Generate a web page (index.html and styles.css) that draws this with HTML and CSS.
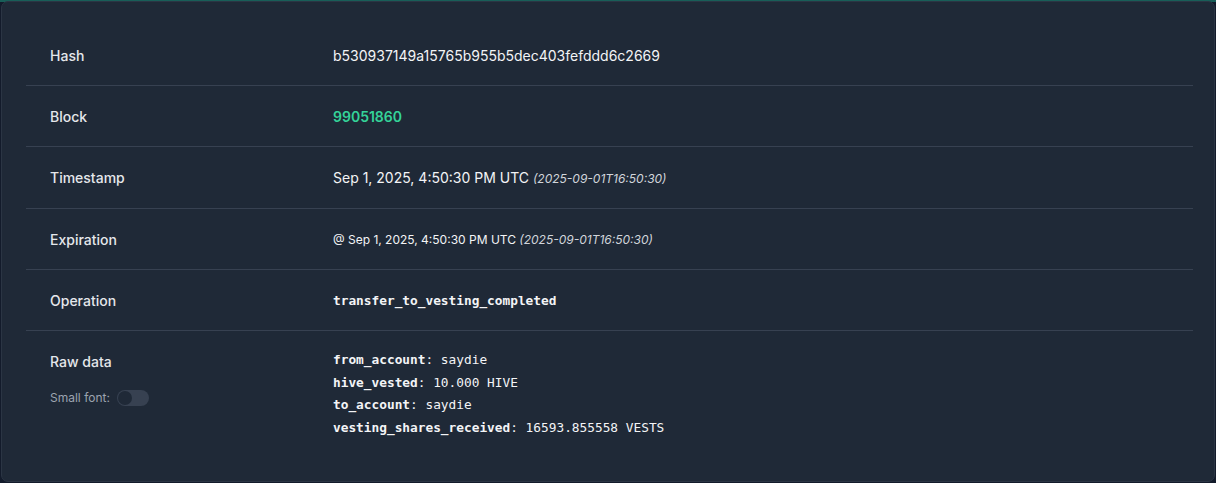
FILE: index.html
```html
<!DOCTYPE html>
<html lang="en">
<head>
<meta charset="utf-8">
<title>Transaction</title>
<link rel="stylesheet" href="styles.css">
</head>
<body>
<div class="card">
  <div class="rows">
    <div class="row">
      <div class="label">Hash</div>
      <div class="value">b530937149a15765b955b5dec403fefddd6c2669</div>
    </div>
    <div class="row">
      <div class="label">Block</div>
      <div class="value block">99051860</div>
    </div>
    <div class="row">
      <div class="label">Timestamp</div>
      <div class="value">Sep 1, 2025, 4:50:30 PM UTC <span class="iso">(2025-09-01T16:50:30)</span></div>
    </div>
    <div class="row">
      <div class="label">Expiration</div>
      <div class="value small">@ Sep 1, 2025, 4:50:30 PM UTC <span class="iso">(2025-09-01T16:50:30)</span></div>
    </div>
    <div class="row">
      <div class="label">Operation</div>
      <div class="value mono bold">transfer_to_vesting_completed</div>
    </div>
    <div class="row last">
      <div class="label">
        <div>Raw data</div>
        <div class="toggle-line">
          <span class="toggle-label">Small font:</span>
          <span class="switch"><span class="knob"></span></span>
        </div>
      </div>
      <div class="value mono raw">
        <div><b>from_account</b>: saydie</div>
        <div><b>hive_vested</b>: 10.000 HIVE</div>
        <div><b>to_account</b>: saydie</div>
        <div><b>vesting_shares_received</b>: 16593.855558 VESTS</div>
      </div>
    </div>
  </div>
</div>
</body>
</html>
```
FILE: styles.css
```css
* { box-sizing: border-box; }
html { background: #111827; }
body {
  margin: 0;
  height: 483px;
  padding: 1px 1px 1px 1px;
  background: linear-gradient(to bottom, #185e58 0, #185e58 2px, #131b2b 2px);
  font-family: Inter, "Noto Sans", sans-serif;
  color: #e5e7eb;
  overflow: hidden;
}
.card {
  height: 481px;
  background: #1f2937;
  border: 1px solid #2b3544;
  border-radius: 7px;
  padding: 23px 21px 0 24px;
}
.rows { display: flex; flex-direction: column; }
.row {
  display: flex;
  padding: 21px 0 19px 24px;
  border-bottom: 1px solid #374151;
  line-height: 20px;
}
.row.last { border-bottom: none; }
.label {
  width: 283px;
  flex-shrink: 0;
  font-size: 14px;
  font-weight: 500;
  color: #e5e7eb;
}
.value {
  font-size: 14px;
  color: #f3f4f6;
}
.value.block { color: #34d399; font-weight: 600; }
.value.small { font-size: 12px; }
.iso { font-style: italic; font-size: 12px; color: #d1d5db; }
.mono {
  font-family: "DejaVu Sans Mono", "Liberation Mono", monospace;
  font-size: 12.8px;
}
.bold { font-weight: 700; }
.raw { line-height: 22.6px; margin-top: -3px; }
.raw b { font-weight: 700; }
.toggle-line {
  display: flex;
  align-items: center;
  gap: 7px;
  margin-top: 16px;
}
.toggle-label { font-size: 12px; color: #9ca3af; font-weight: 400; }
.switch {
  width: 32px;
  height: 16px;
  border-radius: 8px;
  background: #374151;
  display: flex;
  align-items: center;
  padding-left: 1px;
}
.knob {
  width: 14px;
  height: 14px;
  border-radius: 50%;
  background: #1f2937;
}
```
